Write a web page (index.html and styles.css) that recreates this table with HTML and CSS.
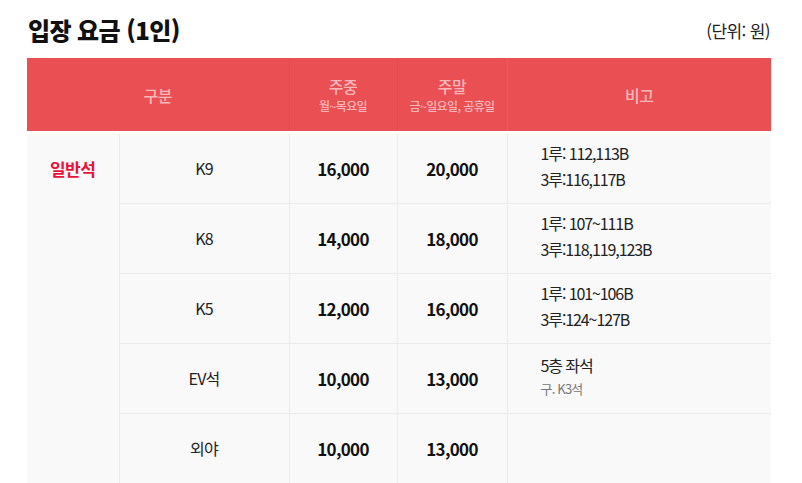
FILE: index.html
```html
<!DOCTYPE html>
<html lang="ko">
<head>
<meta charset="utf-8">
<link rel="stylesheet" href="styles.css">
</head>
<body>
<div class="page">
  <div class="heading">
    <h2 class="title">입장 요금 (1인)</h2>
    <span class="unit">(단위: 원)</span>
  </div>
  <table class="fee">
    <colgroup>
      <col class="c1"><col class="c2"><col class="c3"><col class="c4"><col class="c5">
    </colgroup>
    <thead>
      <tr>
        <th colspan="2">구분</th>
        <th><span class="main">주중</span><span class="sub">월~목요일</span></th>
        <th><span class="main">주말</span><span class="sub">금~일요일, 공휴일</span></th>
        <th>비고</th>
      </tr>
    </thead>
    <tbody>
      <tr>
        <td class="cat" rowspan="5">일반석</td>
        <td class="seat">K9</td>
        <td class="price">16,000</td>
        <td class="price">20,000</td>
        <td class="note">1루: 112,113B<br>3루:116,117B</td>
      </tr>
      <tr>
        <td class="seat">K8</td>
        <td class="price">14,000</td>
        <td class="price">18,000</td>
        <td class="note">1루: 107~111B<br>3루:118,119,123B</td>
      </tr>
      <tr>
        <td class="seat">K5</td>
        <td class="price">12,000</td>
        <td class="price">16,000</td>
        <td class="note">1루: 101~106B<br>3루:124~127B</td>
      </tr>
      <tr>
        <td class="seat">EV석</td>
        <td class="price">10,000</td>
        <td class="price">13,000</td>
        <td class="note">5층 좌석<span class="small">구. K3석</span></td>
      </tr>
      <tr>
        <td class="seat">외야</td>
        <td class="price">10,000</td>
        <td class="price">13,000</td>
        <td class="note"></td>
      </tr>
    </tbody>
  </table>
</div>
</body>
</html>
```
FILE: styles.css
```css
* { box-sizing: border-box; }
html, body { margin: 0; padding: 0; background: #fff; }
body {
  font-family: "Noto Sans CJK KR", "Noto Sans", sans-serif;
  color: #111;
  overflow: hidden;
}
.page {
  padding: 13px 31px 0 27px;
}
.heading {
  display: flex;
  justify-content: space-between;
  align-items: center;
  height: 34px;
  margin-bottom: 11px;
}
.title {
  margin: 0 0 0 1px;
  font-size: 24px;
  font-weight: 900;
  letter-spacing: -0.6px;
  line-height: 34px;
}
.unit {
  font-size: 17px;
  color: #222;
  letter-spacing: -0.6px;
  margin-right: 1px;
}
.fee {
  width: 744px;
  border-collapse: collapse;
  table-layout: fixed;
}
.c1 { width: 92px; }
.c2 { width: 170px; }
.c3 { width: 108px; }
.c4 { width: 110px; }
.c5 { width: 264px; }
.fee th {
  background: #e94f53;
  color: #f8b8ba;
  font-size: 16px;
  font-weight: 500;
  height: 74px;
  border-left: 1px solid rgba(0,0,0,0.03);
  border-bottom: 3px solid #fff;
  line-height: 20px;
  padding: 2px 0 0;
  letter-spacing: -0.5px;
}
.fee th:first-child { border-left: none; }
.fee th:last-child { border-left: 1px solid rgba(255,255,255,0.08); }
.main {
  display: block;
  line-height: 22px;
}
.sub {
  display: block;
  font-size: 12px;
  line-height: 18px;
  letter-spacing: -0.6px;
}
.fee td {
  background: #f9f9f9;
  height: 70px;
  border-left: 1px solid #ebebeb;
  border-top: 1px solid #ebebeb;
  text-align: center;
  font-size: 16px;
  padding: 0;
}
.fee tbody tr:first-child td { height: 71px; border-top: none; }
.fee td.cat {
  border-left: none;
  vertical-align: top;
  color: #e8123a;
  font-size: 17px;
  font-weight: 700;
  padding-top: 22px;
  letter-spacing: -0.4px;
}
.seat { letter-spacing: -0.8px; color: #222; }
.price {
  font-weight: 700;
  font-size: 17px !important;
  letter-spacing: -0.7px;
}
.fee td.note {
  text-align: left;
  padding-left: 33px;
  line-height: 26px;
  letter-spacing: -1.1px;
  color: #222;
  padding-bottom: 4px;
}
.small {
  display: block;
  font-size: 13px;
  color: #777;
  line-height: 22px;
  letter-spacing: -0.8px;
}
```
